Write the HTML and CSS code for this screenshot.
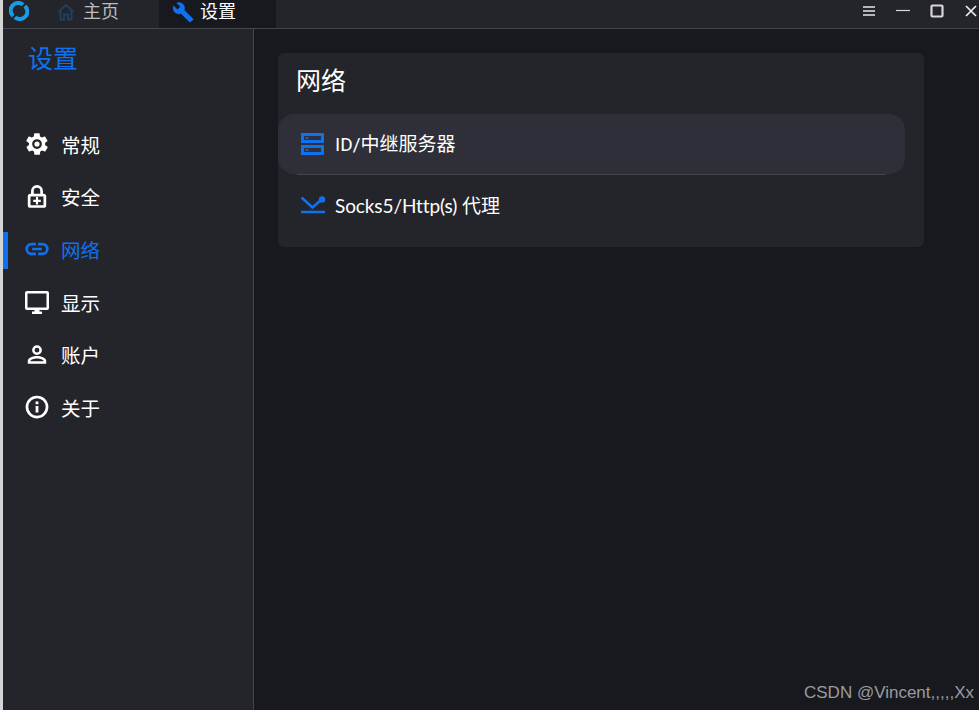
FILE: index.html
```html
<!DOCTYPE html>
<html lang="zh">
<head>
<meta charset="utf-8">
<title>设置</title>
<link rel="stylesheet" href="styles.css">
</head>
<body>
<div class="app">
  <header class="titlebar">
    <svg class="logo" width="20" height="20" viewBox="0 0 22 22" fill="none" stroke="#1a9be8" stroke-width="4.400"><path d="M4.600 16.500A8.200 8.200 0 0 1 15.500 4.200"/><path d="M17.400 5.500A8.200 8.200 0 0 1 6.500 17.800"/></svg>
    <div class="tab tab-home">
      <svg width="18" height="18" viewBox="0 0 18 18" fill="none" stroke="#1d4263" stroke-width="1.800"><path d="M1.500 9 9 2l7.500 7"/><path d="M3.500 8v8.500h3.500v-5h4v5h3.500V8"/></svg>
      <span>主页</span>
    </div>
    <div class="tab tab-active">
      <svg width="22" height="22" viewBox="0 0 24 24" fill="#0f71ee"><path d="M23 19.300 13.600 10.200c.9-2.300.4-5-1.500-6.900C10.100 1.300 7.100.9 4.700 2l4.300 4.300-3 3L1.600 5c-1.200 2.400-.7 5.400 1.300 7.400 1.900 1.900 4.600 2.400 6.900 1.500l9.100 9.100c.4.400 1 .4 1.400 0l2.600-2.300c.5-.4.500-1.100.1-1.400z"/></svg>
      <span>设置</span>
    </div>
    <div class="controls">
      <svg width="14" height="14" viewBox="0 0 14 14" stroke="#e6e6e6" stroke-width="1.500"><path d="M1 3h12M1 7h12M1 11h12"/></svg>
      <svg width="14" height="14" viewBox="0 0 14 14" stroke="#d8d8d8" stroke-width="1.200"><path d="M0 6.500h14"/></svg>
      <svg width="14" height="14" viewBox="0 0 14 14" fill="none" stroke="#d8d8d8" stroke-width="2.200"><rect x="1.500" y="1.500" width="11" height="11" rx="1"/></svg>
      <svg width="14" height="14" viewBox="0 0 14 14" stroke="#eeeeee" stroke-width="1.700"><path d="M2 2l10 10M12 2 2 12"/></svg>
    </div>
  </header>
  <div class="body">
    <aside class="sidebar">
      <h2 class="side-title">设置</h2>
      <nav class="nav">
        <div class="nav-item">
          <svg width="26" height="26" viewBox="0 0 24 24" fill="#fff"><path fill-rule="evenodd" d="M19.400 13c.1-.3.100-.7.100-1s0-.7-.1-1l2.100-1.600c.2-.2.200-.4.100-.6l-2-3.500c-.1-.2-.4-.3-.6-.2l-2.500 1c-.5-.4-1.100-.7-1.700-1l-.4-2.700c0-.2-.2-.4-.5-.4h-4c-.2 0-.4.200-.5.400l-.4 2.700c-.6.300-1.200.6-1.700 1l-2.500-1c-.2-.1-.5 0-.6.200l-2 3.500c-.1.200-.1.500.1.600L4.600 11c0 .3-.1.700-.1 1s0 .7.100 1l-2.100 1.600c-.2.200-.2.400-.1.600l2 3.500c.1.200.4.300.6.200l2.500-1c.5.400 1.100.7 1.700 1l.4 2.700c0 .2.200.4.500.4h4c.2 0 .4-.2.500-.4l.4-2.700c.6-.3 1.200-.6 1.700-1l2.500 1c.2.100.5 0 .6-.2l2-3.500c.1-.2.100-.5-.1-.6L19.400 13zM12 16.500a4.500 4.500 0 1 1 0-9 4.500 4.500 0 0 1 0 9zm0-2.100a2.400 2.400 0 1 0 0-4.800 2.400 2.400 0 0 0 0 4.800z"/></svg>
          <span>常规</span>
        </div>
        <div class="nav-item">
          <svg width="26" height="26" viewBox="0 0 24 24" fill="#fff"><path fill-rule="evenodd" d="M12 1a5.500 5.500 0 0 0-5.500 5.500V9H6a2.500 2.500 0 0 0-2.500 2.500v8A2.500 2.500 0 0 0 6 22h12a2.500 2.500 0 0 0 2.500-2.500v-8A2.500 2.500 0 0 0 18 9h-.5V6.500A5.500 5.500 0 0 0 12 1zM9 9V6.500a3 3 0 0 1 6 0V9H9zm-3 2.500h12v8H6v-8zm5 .5v2.500H8.500v2H11V19h2v-2.500h2.500v-2H13V12h-2z"/></svg>
          <span>安全</span>
        </div>
        <div class="nav-item nav-active">
          <svg width="26" height="26" viewBox="0 0 24 24" fill="none" stroke="#0f71ee" stroke-width="2.500"><path d="M11 7.500H7a4.500 4.500 0 0 0 0 9h4M13 7.500h4a4.500 4.500 0 0 1 0 9h-4M7.500 12h9"/></svg>
          <span>网络</span>
        </div>
        <div class="nav-item">
          <svg width="26" height="26" viewBox="0 0 26 26" fill="#fff"><path fill-rule="evenodd" d="M3 2h20a2 2 0 0 1 2 2v15a2 2 0 0 1-2 2h-7.500v1.500H18V25H8v-2.500h2.500V21H3a2 2 0 0 1-2-2V4a2 2 0 0 1 2-2zm.5 2.500v14h19v-14h-19z"/></svg>
          <span>显示</span>
        </div>
        <div class="nav-item">
          <svg width="26" height="26" viewBox="0 0 24 24" fill="#fff"><path fill-rule="evenodd" d="M12 3a4.500 4.500 0 1 1 0 9 4.500 4.500 0 0 1 0-9zm0 2.300a2.200 2.200 0 1 0 0 4.400 2.200 2.200 0 0 0 0-4.400zM12 13c3.500 0 8.500 1.800 8.500 4.300V20h-17v-2.700C3.500 14.800 8.500 13 12 13zm0 2.300c-2.900 0-6 1.400-6 2.100v.4h12v-.4c0-.7-3.100-2.100-6-2.100z"/></svg>
          <span>账户</span>
        </div>
        <div class="nav-item">
          <svg width="26" height="26" viewBox="0 0 24 24" fill="#fff"><path fill-rule="evenodd" d="M12 1.500a10.500 10.500 0 1 1 0 21 10.500 10.500 0 0 1 0-21zm0 2.500a8 8 0 1 0 0 16 8 8 0 0 0 0-16zm-1.300 7h2.600v6h-2.600v-6zm0-4h2.600v2.500h-2.600V7z"/></svg>
          <span>关于</span>
        </div>
      </nav>
    </aside>
    <main class="main">
      <section class="card">
        <h3 class="card-title">网络</h3>
        <div class="row row-hover">
          <svg width="26" height="24" viewBox="0 0 26 24" fill="none" stroke="#0f71ee" stroke-width="3"><rect x="2.500" y="2.500" width="20" height="7"/><rect x="2.500" y="14.500" width="20" height="7"/><path d="M5.500 6h3M5.500 18h3" stroke-width="1.600"/></svg>
          <span>ID/中继服务器</span>
        </div>
        <div class="divider"></div>
        <div class="row row-proxy">
          <svg width="26" height="24" viewBox="0 0 26 24" fill="none" stroke="#0f71ee" stroke-width="2.500"><path d="M1.500 4.500l11 10L21 7"/><path d="M1 19h24"/><circle cx="22" cy="6.500" r="3.200" fill="#0f71ee" stroke="none"/></svg>
          <span>Socks5/Http(s) 代理</span>
        </div>
      </section>
    </main>
  </div>
  <div class="watermark">CSDN @Vincent,,,,,Xx</div>
</div>
</body>
</html>
```
FILE: styles.css
```css
* { box-sizing: border-box; }
html, body { margin: 0; height: 100%; }
body { background: #18191e; color: #fff; font-family: "Noto Sans CJK SC", "Noto Sans", sans-serif; overflow: hidden; }
.app { position: relative; width: 979px; height: 710px; display: flex; flex-direction: column; border-left: 3px solid #d4d4d4; background: #18191e; }
.titlebar { height: 29px; flex: none; display: flex; align-items: stretch; background: #24252b; border-bottom: 1px solid #44454a; }
.logo { margin: 1px 0 0 6px; flex: none; height: 20px; }
.tab { display: flex; align-items: center; font-family: "Liberation Sans", "Noto Sans CJK SC", sans-serif; font-size: 18px; line-height: 22px; height: 28px; padding-bottom: 5px; flex: none; }
.tab-home { width: 130px; padding-left: 28px; gap: 8px; color: #bdbdbd; }
.tab-active { width: 117px; padding-left: 13px; gap: 6px; background: #18191e; color: #fff; }
.controls { margin-left: auto; display: flex; align-items: center; gap: 20px; padding: 0 1px 6px 0; }
.body { flex: 1; display: flex; min-height: 0; }
.sidebar { width: 251px; flex: none; background: #24252b; border-right: 1px solid #44454a; }
.side-title { margin: 0; padding: 9px 0 0 25px; height: 89px; font-size: 25px; font-weight: 400; line-height: 38px; color: #0f71ee; }
.nav { display: flex; flex-direction: column; }
.nav-item { position: relative; height: 52.600px; display: flex; align-items: center; padding-left: 21px; gap: 11px; font-size: 19.500px; }
.nav-item svg { flex: none; }
.nav-active { color: #0f71ee; }
.nav-active::before { content: ""; position: absolute; left: 0; top: 9px; width: 5px; height: 37px; background: #0f71ee; }
.main { flex: 1; padding: 24px 55px 0 24px; }
.card { width: 646px; height: 194px; background: #24252b; border-radius: 6px; }
.card-title { margin: 0; height: 61px; padding-left: 18px; font-size: 25px; font-weight: 400; line-height: 53px; }
.row { width: 627px; height: 60px; display: flex; align-items: center; padding-left: 22px; gap: 9px; font-family: Roboto, "Noto Sans CJK SC", sans-serif; font-size: 19px; line-height: 28px; }
.row span { margin-top: 2px; }
.row-proxy { font-family: Lato, "Noto Sans CJK SC", sans-serif; letter-spacing: -0.1px; }
.row-hover { background: #2e2f38; border-radius: 16px; }
.divider { height: 1px; margin: 0 38px 0 19px; background: #44454a; }
.watermark { position: absolute; right: 5px; bottom: 7px; font-family: "Liberation Sans", sans-serif; font-size: 17px; color: #9a9b9e; }
```
